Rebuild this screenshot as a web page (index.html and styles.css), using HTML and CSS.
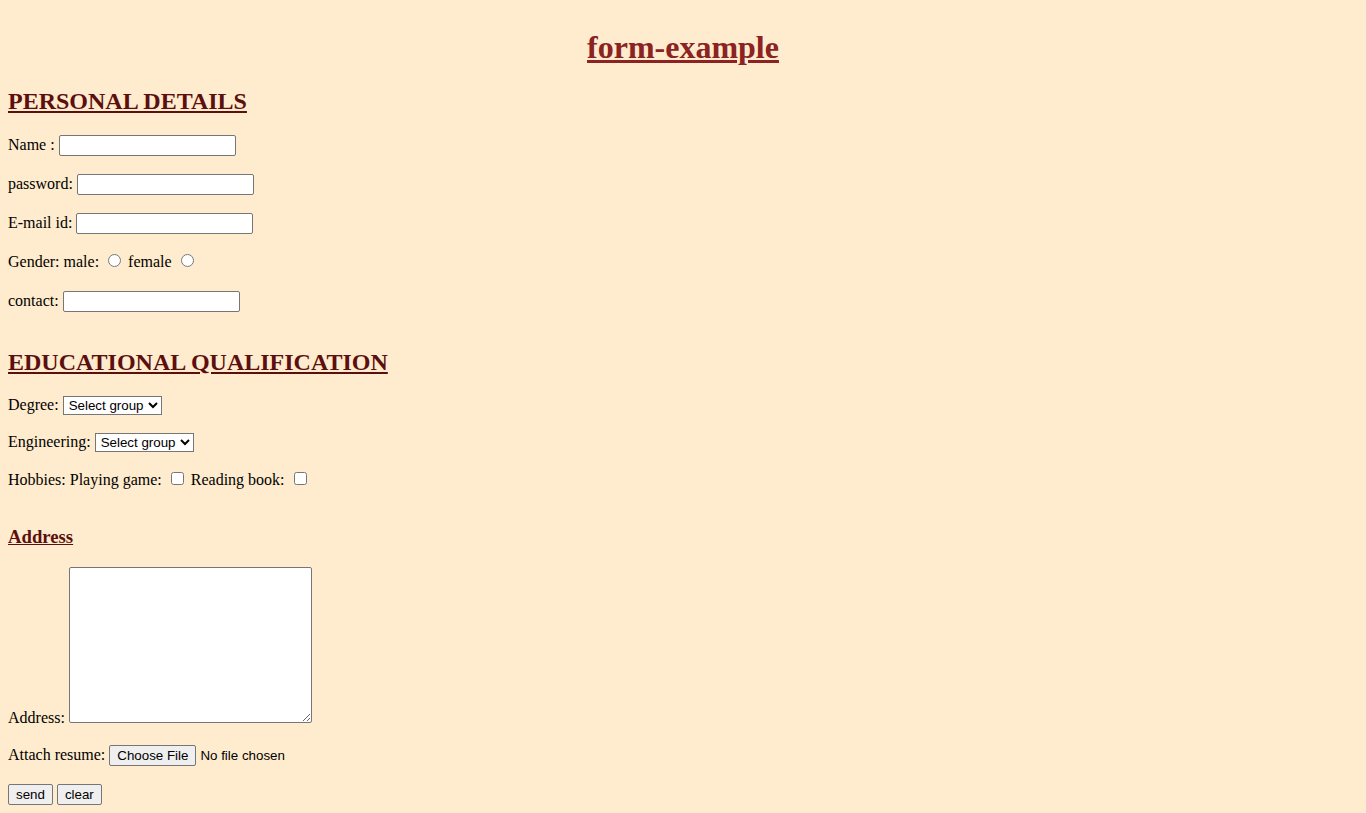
FILE: index.html
```html
<!DOCTYPE html>
<html>
<head>
<meta charset="utf-8">
<title>form-example</title>
<link rel="stylesheet" href="styles.css">
</head>
<body>
<h1 class="title">form-example</h1>
<form class="form">
  <h2 class="section">PERSONAL DETAILS</h2>
  <p class="row">Name : <input class="text" type="text"></p>
  <p class="row">password: <input class="text" type="password"></p>
  <p class="row">E-mail id: <input class="text" type="email"></p>
  <p class="row">Gender: male: <input class="radio" type="radio" name="g"> female <input class="radio" type="radio" name="g"></p>
  <p class="row">contact: <input class="text" type="text"></p>
  <h2 class="section section-gap">EDUCATIONAL QUALIFICATION</h2>
  <p class="row row-sel">Degree: <select class="sel"><option>Select group</option></select></p>
  <p class="row row-sel">Engineering: <select class="sel"><option>Select group</option></select></p>
  <p class="row">Hobbies: Playing game: <input class="check" type="checkbox"> Reading book: <input class="check" type="checkbox"></p>
  <h3 class="sub">Address</h3>
  <p class="row row-area">Address: <textarea class="area"></textarea></p>
  <p class="row row-after-area">Attach resume: <input class="file" type="file"></p>
  <p class="row"><button class="btn" type="button">send</button> <button class="btn" type="reset">clear</button></p>
</form>
</body>
</html>
```
FILE: styles.css
```css
html { background: #ffebcd; }
body {
  margin: 8px;
  background: #ffebcd;
  font-family: "Liberation Serif", "Times New Roman", serif;
  font-size: 16px;
  color: #000;
}
.title {
  text-align: center;
  font-size: 32px;
  margin: 21px 0 21px;
  color: #8b2323;
  text-decoration: underline;
  line-height: 37px;
}
.section {
  font-size: 24px;
  margin: 20px 0 18px;
  color: #5c0f0f;
  text-decoration: underline;
  line-height: 28px;
}
.section-gap { margin-top: 36px; }
.sub {
  font-size: 18.72px;
  margin: 35px 0 18.72px;
  color: #5c0f0f;
  text-decoration: underline;
  line-height: 22px;
}
.row { margin: 16px 0; line-height: 23px; }
.row-sel { line-height: 21px; }
.row-area { margin-bottom: 14px; }
.row-after-area { margin-top: 14px; }
.text {
  width: 177px;
  height: 21px;
  box-sizing: border-box;
  border: 1px solid #767676;
  border-radius: 2px;
  background: #fff;
  padding: 1px 2px;
  font: 13.33px "Liberation Sans", Arial, sans-serif;
  vertical-align: baseline;
}
.radio, .check {
  width: 13px;
  height: 13px;
  margin: 3px 3px 0 5px;
}
.sel {
  width: 99px;
  height: 19px;
  box-sizing: border-box;
  font: 13.33px "Liberation Sans", Arial, sans-serif;
  border: 1px solid #767676;
  border-radius: 0;
  background: #fff;
  padding: 0 0 0 1px;
}
.area {
  width: 243px;
  height: 156px;
  box-sizing: border-box;
  border: 1px solid #767676;
  border-radius: 2px;
  background: #fff;
  vertical-align: baseline;
  margin: 0;
}
.file {
  font: 13.33px "Liberation Sans", Arial, sans-serif;
}
.file::file-selector-button {
  font: 13.33px "Liberation Sans", Arial, sans-serif;
  height: 21px;
  padding: 1px 7px;
  background: #efefef;
  border: 1px solid #767676;
  border-radius: 2px;
  margin-right: 4px;
}
.btn {
  font: 13.33px "Liberation Sans", Arial, sans-serif;
  height: 21px;
  padding: 1px 7px;
  background: #efefef;
  border: 1px solid #767676;
  border-radius: 2px;
  color: #000;
}
```
